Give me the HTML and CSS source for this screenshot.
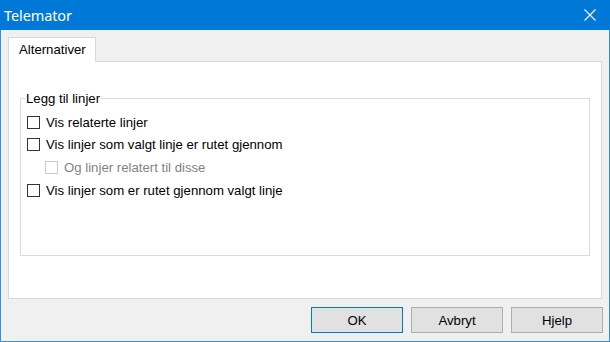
FILE: index.html
```html
<!DOCTYPE html>
<html lang="no">
	<head>
		<meta charset="UTF-8" />
		<title>Telemator</title>
		<link rel="stylesheet" href="styles.css">
	</head>
	<body>
		<div class="window">
			<div class="titlebar">
				<span class="title">Telemator</span>
				<svg class="close" width="12" height="12" viewBox="0 0 12 12">
					<path d="M0.5 0.5 L11.5 11.5 M11.5 0.5 L0.5 11.5" stroke="#fff" stroke-width="1.1" fill="none" />
				</svg>
			</div>

			<div class="content">
				<div class="tabs">
					<div class="tab active">Alternativer</div>
				</div>
				<div class="panel">
					<fieldset class="group">
						<legend>Legg til linjer</legend>
						<label class="row">
							<input type="checkbox" class="check" />
							<span>Vis relaterte linjer</span>
						</label>
						<label class="row">
							<input type="checkbox" class="check" />
							<span>Vis linjer som valgt linje er rutet gjennom</span>
						</label>
						<label class="row sub disabled">
							<input type="checkbox" class="check" disabled />
							<span>Og linjer relatert til disse</span>
						</label>
						<label class="row last">
							<input type="checkbox" class="check" />
							<span>Vis linjer som er rutet gjennom valgt linje</span>
						</label>
					</fieldset>
				</div>

				<!-- Dialog buttons -->
				<div class="buttons">
					<button class="btn default">OK</button>
					<button class="btn">Avbryt</button>
					<button class="btn">Hjelp</button>
				</div>
			</div>
		</div>
	</body>
</html>
```

FILE: styles.css
```css
* {
	box-sizing: border-box;
}

body {
	margin: 0;
	font-family: "Liberation Sans", Arial, sans-serif;
	font-size: 13.2px;
	color: #000;
	background: #f0f0f0;
}

.window {
	width: 610px;
	height: 342px;
	border: 1px solid #3a8fdc;
	border-top: none;
	background: #f0f0f0;
	display: flex;
	flex-direction: column;
}

.titlebar {
	height: 30px;
	margin: 0 -1px;
	background: #0078d7;
	color: #fff;
	display: flex;
	align-items: center;
	justify-content: space-between;
	padding: 0 14px 1px 4px;
}

.title {
	font-family: "Noto Sans", "Open Sans", sans-serif;
	font-size: 14.5px;
	letter-spacing: -0.1px;
}

.close {
	display: block;
	margin-top: 1px;
}

.content {
	flex: 1;
	padding: 7px 6px 8px 7px;
	display: flex;
	flex-direction: column;
}

/* Tabs */
.tabs {
	display: flex;
	height: 24px;
}

.tab {
	width: 88px;
	height: 25px;
	padding: 4px 0 0 10px;
	line-height: 15px;
	background: #fff;
	border: 1px solid #d9d9d9;
	border-bottom: none;
	position: relative;
	z-index: 1;
}

.panel {
	height: 238px;
	margin-right: 1px;
	background: #fff;
	border: 1px solid #d9d9d9;
	padding: 29px 11px 0 11px;
}

/* Group box */
.group {
	margin: 0;
	height: 165px;
	border: 1px solid #dcdcdc;
	padding: 5px 6px 0 4px;
}

.group legend {
	padding: 0 1px;
	line-height: 15px;
}

.row {
	display: flex;
	align-items: center;
	height: 22px;
	margin-left: 2px;
	gap: 6px;
}

.row.sub {
	margin-top: 1px;
	margin-left: 20px;
}

.row.last {
	margin-top: 1px;
}

.check {
	appearance: none;
	-webkit-appearance: none;
	width: 13px;
	height: 13px;
	margin: 0;
	border: 1px solid #333;
	background: #fff;
	flex: none;
}

.disabled {
	color: #838383;
}

.disabled .check {
	border-color: #cccccc;
}

/* Dialog buttons */
.buttons {
	display: flex;
	justify-content: flex-end;
	gap: 8px;
	margin-top: 8px;
}

.btn {
	width: 92px;
	height: 26px;
	font-family: "Liberation Sans", Arial, sans-serif;
	font-size: 13.2px;
	color: #000;
	background: #e1e1e1;
	border: 1px solid #adadad;
	padding: 0;
}

.btn.default {
	border-color: #0078d7;
}
```
